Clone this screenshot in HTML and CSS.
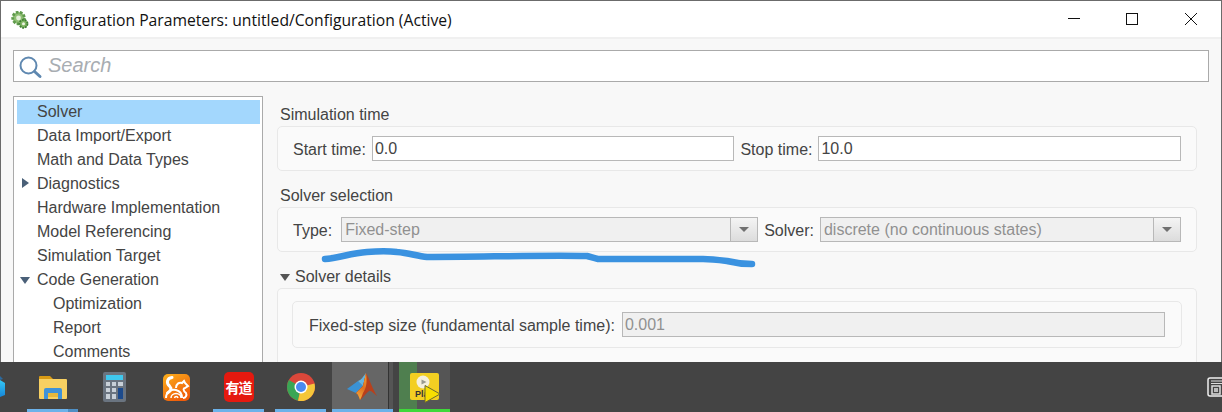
FILE: index.html
```html
<!DOCTYPE html>
<html lang="en">
<head>
<meta charset="utf-8">
<title>Configuration Parameters</title>
<link rel="stylesheet" href="styles.css">
</head>
<body>
<div class="window">
  <header class="titlebar">
    <svg class="app-icon" width="18" height="18" viewBox="0 0 18 18"><circle cx="7.500" cy="7" r="6" fill="#8fbf74"/><circle cx="7.500" cy="7" r="5.800" fill="none" stroke="#5f9a4c" stroke-width="2.800" stroke-dasharray="2.600 1.400"/><circle cx="7.500" cy="7" r="2.400" fill="#e4efda"/><circle cx="12.500" cy="12.800" r="4.200" fill="#7fb562"/><circle cx="12.500" cy="12.800" r="4" fill="none" stroke="#3f7d34" stroke-width="1.800" stroke-dasharray="1.800 1"/><circle cx="12.500" cy="12.800" r="1.500" fill="#eef4e4"/></svg>
    <span class="title">Configuration Parameters: untitled/Configuration (Active)</span>
    <div class="controls">
      <svg width="14" height="14" viewBox="0 0 14 14"><path d="M2 6.500h12" stroke="#111" fill="none"/></svg>
      <svg width="14" height="14" viewBox="0 0 14 14"><rect x="1.500" y="1.500" width="11" height="11" stroke="#111" fill="none"/></svg>
      <svg width="14" height="14" viewBox="0 0 14 14"><path d="M1 1l12 12M13 1L1 13" stroke="#111" fill="none"/></svg>
    </div>
  </header>
  <div class="content">
    <div class="search">
      <svg width="24" height="26" viewBox="0 0 24 26"><circle cx="9.500" cy="12.500" r="8" fill="none" stroke="#5f88b0" stroke-width="2"/><path d="M15.500 18.500l5.500 5" stroke="#5f88b0" stroke-width="3" stroke-linecap="round"/></svg>
      <span class="search-text">Search</span>
    </div>
    <div class="split">
      <nav class="tree">
        <div class="row selected">Solver</div>
        <div class="row">Data Import/Export</div>
        <div class="row">Math and Data Types</div>
        <div class="row"><span class="arrow-right"></span>Diagnostics</div>
        <div class="row">Hardware Implementation</div>
        <div class="row">Model Referencing</div>
        <div class="row">Simulation Target</div>
        <div class="row"><span class="arrow-down"></span>Code Generation</div>
        <div class="row sub">Optimization</div>
        <div class="row sub">Report</div>
        <div class="row sub">Comments</div>
      </nav>
      <main class="pane">
        <h2 class="group-title first">Simulation time</h2>
        <section class="panel">
          <label class="lbl">Start time:</label>
          <div class="input grow">0.0</div>
          <label class="lbl">Stop time:</label>
          <div class="input grow">10.0</div>
        </section>
        <h2 class="group-title">Solver selection</h2>
        <section class="panel">
          <label class="lbl lbl-type">Type:</label>
          <div class="combo type"><span class="combo-text">Fixed-step</span><span class="combo-btn"><i></i></span></div>
          <label class="lbl">Solver:</label>
          <div class="combo solver"><span class="combo-text">discrete (no continuous states)</span><span class="combo-btn"><i></i></span></div>
        </section>
        <h2 class="group-title third"><span class="arrow-gray"></span>Solver details</h2>
        <section class="panel outer">
          <div class="inner">
            <label class="lbl lbl-size">Fixed-step size (fundamental sample time):</label>
            <div class="input disabled grow">0.001</div>
          </div>
        </section>
      </main>
    </div>
    <svg class="scribble" width="440" height="24" viewBox="0 0 440 24"><path d="M4 13C18 12 30 7 46 6C58 5 68 5 76 6C88 7 96 10 106 11C160 11 220 9 266 10C270 11 272 12 277 13C310 13 350 13 382 13C390 13 398 14 406 15C414 17 422 18 431 18" fill="none" stroke="#3a92e0" stroke-width="6.500" stroke-linecap="round" stroke-linejoin="round"/></svg>
  </div>
</div>
<footer class="taskbar">
  <svg class="edge-icon" width="5" height="22" viewBox="0 0 5 22"><defs><linearGradient id="edgeg" x1="0" y1="0" x2="0" y2="1"><stop offset="0" stop-color="#35c8f5"/><stop offset="1" stop-color="#1686d8"/></linearGradient></defs><path d="M0 4L5 7V19L0 21Z" fill="url(#edgeg)"/><path d="M0 0L3 3L0 4Z" fill="#2a6aa0"/></svg>
  <div class="slot s-folder running">
    <svg width="28" height="23" viewBox="0 0 28 23"><path d="M0 1q0-1 1-1h10l3 3H0z" fill="#d89a14"/><path d="M0 3h27q1 0 1 1v18q0 1-1 1H1q-1 0-1-1z" fill="#f7d062"/><path d="M5 23V14q0-2 2-2h14q2 0 2 2v9h-4v-6H9v6z" fill="#3f92d8"/><path d="M9 17h10v4H9z" fill="#e6b83c"/></svg>
    <span class="seg"></span>
  </div>
  <div class="slot s-calc">
    <svg width="23" height="30" viewBox="0 0 23 30"><rect width="23" height="30" rx="2" fill="#6a7480"/><rect x="3" y="3" width="17" height="5" fill="#3fc8ee"/><path d="M3 10h4v4H3zM9 10h4v4H9zM15 10h5v4h-5zM3 16h4v4H3zM9 16h4v4H9zM3 22h4v5H3zM9 22h4v5H9z" fill="#c8d0d8"/><path d="M15 16h5v11h-5z" fill="#1c4a8c"/></svg>
  </div>
  <div class="slot s-uc">
    <svg width="27" height="27" viewBox="0 0 27 27"><defs><linearGradient id="ucg" x1="0" y1="0" x2="0.600" y2="1"><stop offset="0" stop-color="#fbb01c"/><stop offset="1" stop-color="#ef5c0a"/></linearGradient></defs><rect width="27" height="27" rx="5" fill="url(#ucg)"/><path d="M9 3.500C4 4 3 9 6.500 12C9 14.500 8 17 4.500 19" fill="none" stroke="#fff" stroke-width="3" stroke-linecap="round"/><path d="M3 24C3 18 8 15 13 16C17 17 19 20 19 24" fill="none" stroke="#fff" stroke-width="2"/><path d="M8 24a5 4.500 0 0 1 10 0M11.500 24a1.800 1.800 0 0 1 3.500 0" fill="none" stroke="#fff" stroke-width="1.500"/><path d="M13 14C13 10 16 8 19 9L21 7L22 9L25 12L22 14C20 14 20 17 23 19C24 21 23 24 20 24" fill="none" stroke="#fff" stroke-width="2"/></svg>
  </div>
  <div class="slot s-youdao running">
    <div class="youdao">有道</div>
  </div>
  <div class="slot s-chrome running">
    <svg width="28" height="28" viewBox="0 0 28 28"><circle cx="14" cy="14" r="14" fill="#d9473a"/><path d="M14 14L1.900 7A14 14 0 0 0 11 27.700z" fill="#3aa655"/><path d="M14 14L27.500 10.500A14 14 0 0 1 11 27.700z" fill="#f5c63a"/><circle cx="14" cy="14" r="6.500" fill="#fff"/><circle cx="14" cy="14" r="5" fill="#4a8af0"/></svg>
  </div>
  <div class="slot s-matlab active">
    <svg width="30" height="28" viewBox="0 0 30 28"><defs><linearGradient id="mlg" x1="0.500" y1="0" x2="0.300" y2="1"><stop offset="0" stop-color="#f0a030"/><stop offset="0.500" stop-color="#e07020"/><stop offset="1" stop-color="#f2b040"/></linearGradient></defs><path d="M0 16L11 8L16 13L9 20Z" fill="#3a92d4"/><path d="M11 8C14 7 16 4 19 0L16 13Z" fill="#64b4e0"/><path d="M19 0C22 5 26 17 30 23C27 21 24 17 22 18C19 20 16 25 13 27C12 24 11 21 9 20L16 13C17 9 18 4 19 0Z" fill="#b8401c"/><path d="M19 0C20 8 20 14 16 20C15 23 14 25 13 27C12 24 11 21 9 20L16 13C17 9 18 4 19 0Z" fill="url(#mlg)"/></svg>
  </div>
  <div class="divider"></div>
  <div class="slot s-player">
    <span class="player-green"></span>
    <svg class="player-icon" width="31" height="31" viewBox="0 0 31 31"><rect x="0" y="1" width="29" height="27" rx="2" fill="#f3cf22"/><circle cx="13" cy="10" r="6.500" fill="#f5f0dc"/><path d="M11.500 7.500l5 2.500-5 2.500z" fill="#9a9a90"/><text x="5" y="25" class="pl-text">Pla</text><path d="M15 13.500L30 22L15 30.500Z" fill="#f7df00" stroke="#6a6a30"/></svg>
  </div>
  <div class="tray">
    <svg width="15" height="20" viewBox="0 0 15 20"><path d="M15 1H3Q1 1 1 3v14q0 2 2 2h12" fill="none" stroke="#eee" stroke-width="1.500"/><path d="M4 4h11M4 6.500h11" stroke="#ddd"/><rect x="5" y="9" width="8" height="8" fill="none" stroke="#ddd" stroke-width="1.500"/><rect x="7" y="11" width="4" height="4" fill="#bbb"/></svg>
  </div>
</footer>
</body>
</html>
```
FILE: styles.css
```css
* { box-sizing: border-box; }
html, body { margin: 0; padding: 0; }
body { width: 1222px; height: 412px; overflow: hidden; background: #444; display: flex; flex-direction: column; }

.window { height: 362px; overflow: hidden; background: #f8f8f8; border: 1px solid #6b6b6b; border-bottom: 0; display: flex; flex-direction: column; }
.titlebar { height: 38px; flex: none; background: #fff; display: flex; align-items: center; padding: 2px 0 0 10px; border-bottom: 2px solid #f0f0f0; }
.app-icon { margin-right: 6px; }
.title { font: 15.7px "Open Sans", sans-serif; color: #111; }
.controls { margin-left: auto; align-self: flex-start; display: flex; gap: 45px; padding: 9px 23px 0 0; }

.content { flex: 1; position: relative; padding: 11px 12px 0 12px; min-height: 0; }
.search { height: 32px; background: #fff; border: 1px solid #aaa; display: flex; align-items: center; padding-left: 5px; gap: 5px; }
.search-text { font: italic 20px "Liberation Sans", sans-serif; color: #a8adb2; padding-bottom: 2px; }

.split { display: flex; margin-top: 14px; gap: 14px; font: 16px "Liberation Sans", sans-serif; color: #444; }
.tree { width: 250px; flex: none; height: 280px; background: #fff; border: 1px solid #aaa; padding: 3px 2px 3px 3px; }
.row { height: 24px; line-height: 24px; padding-left: 20px; white-space: nowrap; position: relative; }
.row.selected { background: #a3d7fd; }
.row.sub { padding-left: 36px; }
.arrow-right { position: absolute; left: 5px; top: 6px; border-left: 7px solid #4a6078; border-top: 5px solid transparent; border-bottom: 5px solid transparent; }
.arrow-down { position: absolute; left: 3px; top: 9px; border-top: 7px solid #4a6078; border-left: 5px solid transparent; border-right: 5px solid transparent; }

.pane { flex: 1; min-width: 0; padding-right: 12px; }
.group-title { font: 16px/20px "Liberation Sans", sans-serif; color: #444; margin: 15px 0 1px 3px; height: 20px; }
.group-title.first { margin-top: 9px; }
.group-title.third { display: flex; align-items: center; }
.arrow-gray { border-top: 7px solid #555; border-left: 5px solid transparent; border-right: 5px solid transparent; margin-right: 5px; }

.panel { height: 45px; border: 1px solid #e8e8e8; border-radius: 5px; display: flex; align-items: center; padding: 0 15px; background: #fafafa; }
.lbl { margin-right: 6px; padding-top: 2px; white-space: nowrap; }
.lbl-type { margin-right: 9px; }
.lbl-size { margin-right: 7px; }
.input { height: 25px; line-height: 24px; background: #fff; border: 1px solid #b8b8b8; padding: 0 2px; color: #444; }
.grow { flex: 1; min-width: 0; }
.input + .lbl { margin-left: 6px; }
.input.disabled { background: #f0f0f0; color: #909090; }
.panel.outer { height: 80px; display: block; padding: 12px 14px 0; border-bottom: 0; border-radius: 5px 5px 0 0; }
.inner { height: 47px; border: 1px solid #e8e8e8; border-radius: 5px; display: flex; align-items: center; padding: 0 16px; }

.combo { height: 25px; display: flex; background: #f0f0f0; border: 1px solid #b8b8b8; color: #909090; }
.combo.type { width: 417px; }
.combo.solver { width: 361px; }
.combo + .lbl { margin-left: 6px; }
.combo-text { flex: 1; line-height: 23px; padding-left: 3px; }
.combo-btn { width: 27px; flex: none; border-left: 1px solid #b8b8b8; background: linear-gradient(#f4f4f4, #dcdcdc); display: flex; align-items: center; justify-content: center; }
.combo-btn i { border-top: 5px solid #707070; border-left: 5px solid transparent; border-right: 5px solid transparent; }

.scribble { position: absolute; left: 320px; top: 207px; }

.taskbar { height: 50px; flex: none; background: #444; position: relative; display: flex; align-items: stretch; padding-left: 27px; }
.edge-icon { position: absolute; left: 0; top: 14px; }
.slot { width: 51px; margin-right: 11px; height: 50px; position: relative; display: flex; align-items: center; justify-content: center; flex: none; }
.slot.running::after, .slot.active::after { content: ""; position: absolute; left: 0; right: 0; bottom: 0; height: 3px; background: #6cb2ea; }
.seg { position: absolute; right: 0; bottom: 0; width: 10px; height: 3px; background: #4f8fc4; z-index: 1; }
.youdao { width: 30px; height: 30px; border-radius: 5px; background: #e5190f; color: #fff; font: bold 14px/30px "Noto Sans CJK SC", sans-serif; text-align: center; white-space: nowrap; overflow: hidden; letter-spacing: -1px; }
.s-matlab { width: 56px; margin-right: 0; margin-left: -5px; padding-left: 4px; background: #666; }
.s-matlab.active::after { right: -5px; }
.divider { width: 5px; background: #555; border-left: 1px solid #333; flex: none; margin-right: 6px; }
.s-player { background: #555; margin-right: 0; }
.s-player::after { content: ""; position: absolute; left: 0; right: 0; bottom: 0; height: 3px; background: #3fd83a; }
.player-green { position: absolute; left: 0; top: 0; bottom: 3px; width: 18px; background: #4f7f4f; }
.player-icon { position: relative; margin-left: 1px; }
.pl-text { font: bold 9px "Liberation Sans", sans-serif; fill: #333; }
.tray { margin-left: auto; display: flex; align-items: center; }
```
